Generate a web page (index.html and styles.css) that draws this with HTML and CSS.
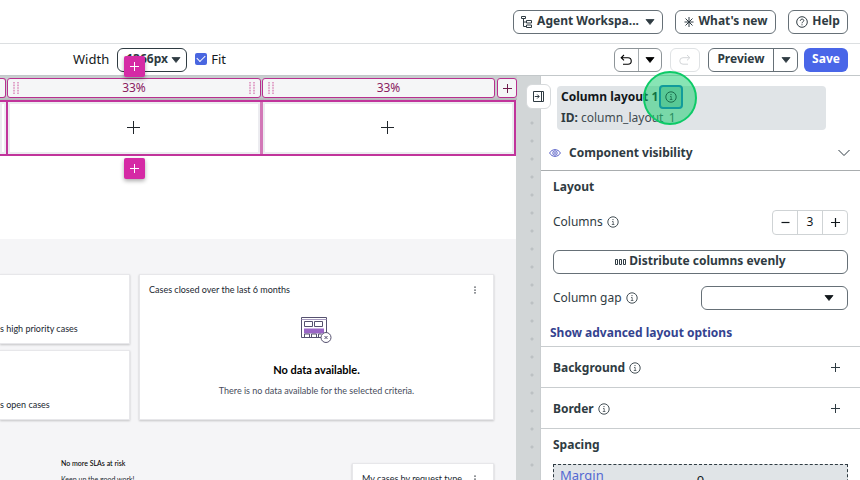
FILE: index.html
```html
<!DOCTYPE html>
<html lang="en">
<head>
<meta charset="utf-8">
<title>UI Builder</title>
<link rel="stylesheet" href="styles.css">
</head>
<body>
<svg width="0" height="0" class="defs" aria-hidden="true">
  <symbol id="info" viewBox="0 0 12 12"><circle cx="6" cy="6" r="5.2" fill="none" stroke="currentColor" stroke-width=".9"/><path d="M5 5.500h1.200v3M4.800 8.500h2.600" fill="none" stroke="currentColor" stroke-width=".7"/><circle cx="6" cy="3.600" r=".6" fill="currentColor"/></symbol>
  <symbol id="caret" viewBox="0 0 10 6"><path d="M1 .5h8L5 5.500z" fill="currentColor" stroke="currentColor" stroke-linejoin="round" stroke-width=".8"/></symbol>
  <symbol id="plus" viewBox="0 0 13 13"><path d="M6.500 0v13M0 6.500h13" fill="none" stroke="currentColor"/></symbol>
  <symbol id="plus-small" viewBox="0 0 9 9"><path d="M4.500 0v9M0 4.500h9" fill="none" stroke="currentColor"/></symbol>
  <symbol id="grip" viewBox="0 0 6 12"><path d="M1 0v12M5 0v12" fill="none" stroke="currentColor" stroke-width="1.6" stroke-dasharray="1.6 1"/></symbol>
  <symbol id="more" viewBox="0 0 2 8"><path d="M1 .5v1.300M1 3.400v1.300M1 6.200v1.300" stroke="currentColor" stroke-width="1.3"/></symbol>
</svg>

<header class="topbar">
  <button class="btn workspace" aria-haspopup="listbox"><svg width="12" height="12" viewBox="0 0 12 12" fill="none" stroke="currentColor"><path d="M.5.5h4v2h-4zM2.500 2.500v8h3M2.500 6h3M5.500 4.500h5v2.500h-5zM5.500 9h5v2.500h-5z"/></svg><span>Agent Workspa...</span><svg class="caret" width="10" height="6"><use href="#caret"/></svg></button>
  <button class="btn news"><svg width="12" height="12" viewBox="0 0 12 12" fill="none" stroke="currentColor"><path d="M6 1v10M1.500 6h9M2.500 2.500l7 7M9.500 2.500l-7 7"/></svg><span>What's new</span></button>
  <button class="btn help"><svg width="12" height="12" viewBox="0 0 12 12" fill="none" stroke="currentColor"><circle cx="6" cy="6" r="5.300"/><path d="M4.300 4.800c0-2.300 3.500-2.200 3.500-.2 0 1.200-1.800 1.200-1.800 2.700M6 8.300v1"/></svg><span>Help</span></button>
</header>

<div class="toolbar">
  <div class="viewport">
    <label for="width">Width</label>
    <span class="select width-select"><select id="width"><option>1366px</option></select><svg class="caret" width="10" height="6"><use href="#caret"/></svg></span>
    <label class="fit"><input type="checkbox" checked><span>Fit</span></label>
  </div>
  <div class="split undo">
    <button aria-label="Undo"><svg width="12" height="12" viewBox="0 0 12 12" fill="none" stroke="currentColor" stroke-width="1.1"><path d="M4 1L1.200 3.700 4 6.400M1.200 3.700H8a3 3 0 0 1 0 6.500H3"/></svg></button>
    <button aria-label="Undo history"><svg width="10" height="6"><use href="#caret"/></svg></button>
  </div>
  <button class="redo" aria-label="Redo" disabled><svg width="12" height="12" viewBox="0 0 12 12" fill="none" stroke="currentColor"><path d="M8 1l2.800 2.700L8 6.400M10.800 3.700H4a3 3 0 0 0 0 6.500h5"/></svg></button>
  <div class="split preview">
    <button>Preview</button>
    <button aria-label="Preview options"><svg width="10" height="6"><use href="#caret"/></svg></button>
  </div>
  <button class="save">Save</button>
</div>

<div class="workspace-body">
  <main class="stage">
    <div class="artboard">
      <div class="column-heads">
        <div class="head head-clipped"></div>
        <div class="head"><svg width="6" height="12"><use href="#grip"/></svg><span>33%</span><svg width="6" height="12"><use href="#grip"/></svg></div>
        <div class="head head-last"><svg width="6" height="12"><use href="#grip"/></svg><span>33%</span></div>
        <button class="head head-add" aria-label="Add column"><svg width="9" height="9"><use href="#plus-small"/></svg></button>
      </div>
      <div class="drop-row">
        <div class="drop"></div>
        <div class="drop">
          <button class="insert above" aria-label="Insert above"><svg width="9" height="9"><use href="#plus-small"/></svg></button>
          <svg width="13" height="13"><use href="#plus"/></svg>
          <button class="insert below" aria-label="Insert below"><svg width="9" height="9"><use href="#plus-small"/></svg></button>
        </div>
        <div class="drop drop-last"><svg width="13" height="13"><use href="#plus"/></svg></div>
      </div>
      <div class="blank"></div>
      <div class="dashboard">
        <div class="cards">
          <div class="stats">
            <section class="card stat">s high priority cases</section>
            <section class="card stat">s open cases</section>
          </div>
          <section class="card chart">
            <header><span>Cases closed over the last 6 months</span><svg width="2" height="8"><use href="#more"/></svg></header>
            <div class="empty">
              <svg width="31" height="27" viewBox="0 0 31 27" fill="none" stroke="#55516f"><path d="M.5.5h25v20H.5z"/><path d="M.5 2.500h25" stroke="#a79abf"/><path d="M3.500 4.500h8v5h-8zM13.500 4.500h8v5h-8z"/><path d="M3 11.500h20v5H3z" fill="#9a66c6" stroke="none"/><path d="M3.500 20v-3h5v3M10.500 20v-3h5v3M17.500 20v-3h3"/><circle cx="25" cy="20.500" r="5" fill="#fff"/><path d="M23.500 19l3 3M26.500 19l-3 3"/></svg>
              <h2>No data available.</h2>
              <p>There is no data available for the selected criteria.</p>
            </div>
          </section>
        </div>
        <div class="lower">
          <div class="sla"><strong>No more SLAs at risk</strong><span>Keep up the good work!</span></div>
          <section class="card requests"><span>My cases by request type</span><svg width="2" height="8"><use href="#more"/></svg></section>
        </div>
      </div>
    </div>
    <div class="gutter"></div>
  </main>

  <aside class="panel">
    <button class="collapse" aria-label="Collapse panel"><svg width="11" height="11" viewBox="0 0 11 11" fill="none" stroke="currentColor"><path d="M.5.5h10v10H.5zM8.500.5v10M1.800 5.500h4.200M4.200 3.500l2 2-2 2"/></svg></button>
    <div class="identity">
      <h1>Column layout 1<span class="hotspot"><button aria-label="Component information"><svg width="12" height="12"><use href="#info"/></svg></button></span></h1>
      <p><b>ID:</b> column_layout_1</p>
    </div>
    <button class="visibility"><svg width="12" height="8" viewBox="0 0 12 8" fill="none" stroke="#5b62c8"><path d="M.6 4C3-.5 9-.5 11.400 4 9 8.500 3 8.500.6 4z"/><circle cx="6" cy="4" r="2.200"/><circle cx="6" cy="4" r=".5"/></svg><span>Component visibility</span><svg class="chevron" width="12" height="8" viewBox="0 0 12 8" fill="none" stroke="currentColor"><path d="M.5 1L6 6.500 11.500 1"/></svg></button>
    <section class="layout">
      <h2>Layout</h2>
      <div class="field">
        <label for="columns">Columns</label><svg width="12" height="12"><use href="#info"/></svg>
        <div class="stepper"><button aria-label="Fewer columns"><svg width="9" height="9" viewBox="0 0 9 9"><path d="M.5 4.500h8" stroke="currentColor" stroke-width="1.200"/></svg></button><input id="columns" value="3"><button aria-label="More columns"><svg width="9" height="9" viewBox="0 0 9 9"><path d="M4.500 0v9M0 4.500h9" stroke="currentColor" stroke-width="1.200"/></svg></button></div>
      </div>
      <button class="btn distribute"><svg width="11" height="8" viewBox="0 0 11 8" fill="none" stroke="currentColor"><path d="M.5 1.500h2v5h-2zM4.500 1.500h2v5h-2zM8.500 1.500h2v5h-2z"/></svg><span>Distribute columns evenly</span></button>
      <div class="field">
        <label for="gap">Column gap</label><svg width="12" height="12"><use href="#info"/></svg>
        <span class="select gap-select"><select id="gap"><option></option></select><svg class="caret" width="10" height="6"><use href="#caret"/></svg></span>
      </div>
      <a class="advanced" href="#advanced">Show advanced layout options</a>
    </section>
    <section class="group"><h2>Background</h2><svg width="12" height="12"><use href="#info"/></svg><button aria-label="Add background"><svg width="9" height="9"><use href="#plus-small"/></svg></button></section>
    <section class="group"><h2>Border</h2><svg width="12" height="12"><use href="#info"/></svg><button aria-label="Add border"><svg width="9" height="9"><use href="#plus-small"/></svg></button></section>
    <section class="spacing">
      <h2>Spacing</h2>
      <div class="margin-box"><label for="margin">Margin</label><input id="margin" value="0"></div>
    </section>
  </aside>
</div>
</body>
</html>
```
FILE: styles.css
```css
*, ::before, ::after { box-sizing: border-box; }
body {
  margin: 0;
  height: 100vh;
  overflow: hidden;
  display: flex;
  flex-direction: column;
  background: #fff;
  color: #2f3b42;
  font: 12px/18px "Noto Sans", sans-serif;
}
.defs { position: absolute; }
svg { flex: none; display: block; }
h1, h2, p { margin: 0; font-size: inherit; }
button, select, input { font: inherit; color: inherit; margin: 0; }
button { padding: 0; border: 0; background: none; display: flex; align-items: center; justify-content: center; }

.btn {
  height: 24px;
  gap: 4px;
  border: 1px solid #667077;
  border-radius: 6px;
  background: #fff;
  font-weight: 700;
}
.btn span { padding-bottom: 2px; }

.topbar {
  flex: none;
  height: 44px;
  padding: 0 12px;
  display: flex;
  align-items: center;
  justify-content: flex-end;
  gap: 12px;
  border-bottom: 1px solid #dcdfe1;
}
.workspace { width: 150px; }
.workspace .caret { margin-left: 2px; }
.news { width: 101px; gap: 3px; }
.help { width: 60px; }

.toolbar {
  flex: none;
  height: 32px;
  padding: 0 12px;
  display: flex;
  align-items: center;
  border-bottom: 1px solid #c3c8ca;
}
.viewport { flex: 1; display: flex; align-items: center; padding-left: 61px; color: #151920; font-size: 13px; }
.viewport > label { padding-bottom: 2px; }
.select { position: relative; display: flex; }
.select select {
  appearance: none;
  width: 100%;
  height: 24px;
  padding: 0 8px 2px;
  border: 1px solid #667077;
  border-radius: 6px;
  background: #fff;
}
.select .caret { position: absolute; right: 14px; top: 9px; color: #11171b; pointer-events: none; }
.width-select { width: 70px; margin: 0 8px; }
.width-select select { border-color: #2f3b42; color: #2f3b42; font-size: 12px; font-weight: 700; }
.width-select .caret { right: 6px; color: #2f3b42; }
.fit { display: flex; align-items: center; gap: 4px; }
.fit input {
  appearance: none;
  width: 12px;
  height: 12px;
  border-radius: 2px;
  background: #4966e0;
  display: grid;
  place-items: center;
}
.fit input::after {
  content: "";
  width: 8px;
  height: 5px;
  border: solid #fff;
  border-width: 0 0 1px 1px;
  transform: translateY(-1px) rotate(-45deg);
}
.split { height: 24px; display: flex; border: 1px solid #667077; border-radius: 6px; }
.split button + button { border-left: 1px solid #667077; width: 24px; }
.undo { width: 48px; border-color: #8d9498; color: #000; }
.undo button { flex: 1; }
.undo button + button { border-color: #a5abae; }
.redo { width: 30px; height: 24px; margin: 0 8px; border: 1px solid #dfe2e4; border-radius: 6px; color: #d3d6d8; }
.preview { width: 90px; }
.preview button { font-weight: 700; }
.preview button:first-child { flex: 1; padding-bottom: 2px; }
.save { width: 44px; height: 24px; margin-left: 6px; padding-bottom: 2px; border-radius: 6px; background: #4966e8; color: #fff; font-weight: 700; }

.workspace-body { flex: 1; min-height: 0; display: flex; }
.stage { flex: 1; min-width: 0; display: flex; background: #d2d6d7; }
.artboard { flex: 1; min-width: 0; display: flex; flex-direction: column; }
.artboard > * { flex: none; }
.gutter {
  width: 24px;
  margin-top: 38px;
  background: radial-gradient(circle, #bcc1c3 1px, transparent 2px) 7px 0 / 18px 18px repeat-y;
}
.column-heads {
  display: grid;
  grid-template-columns: 6px 254fr 233fr 21px;
  gap: 1px;
  height: 24px;
  padding-top: 2px;
  margin-right: -1px;
  background: linear-gradient(#c9cecf 20px, #b5b7b9);
}
.head {
  height: 20px;
  display: flex;
  align-items: center;
  justify-content: space-between;
  padding: 0 5px;
  border: 1px solid #b8308f;
  border-radius: 3px;
  background: #f5f6f7;
  color: #8a215f;
}
.head > svg { color: #dc8fbd; }
.head-clipped { padding: 0; border-left: 0; border-radius: 0 3px 3px 0; }
.head-last span { flex: 1; padding-left: 14px; text-align: center; }
.head-add { margin-left: 1px; padding: 0; justify-content: center; }
.head-add > svg { color: #701c4c; }
.drop-row {
  display: grid;
  grid-template-columns: 6px 254fr 254fr;
  height: 56px;
  background: #fff;
  border: solid #c1349b;
  border-width: 2px 2px 2px 0;
}
.drop {
  position: relative;
  display: flex;
  align-items: center;
  justify-content: center;
  padding-right: 2px;
  padding-bottom: 1px;
  box-shadow: inset 0 0 0 2px #ececf0;
  color: #20262b;
}
.drop + .drop { border-left: 2px solid #c1349b; }
.drop + .drop-last { border-left: 3px solid #d278b7; }
.insert {
  position: absolute;
  left: calc(50% - 10px);
  z-index: 2;
  width: 21px;
  height: 21px;
  border-radius: 2px;
  background: #d52aa5;
  color: #fff;
  box-shadow: 0 2px 4px #0005;
}
.above { top: -46px; }
.below { bottom: -25px; }
.blank { height: 83px; background: #fff; }

.artboard > .dashboard {
  flex: 1;
  min-height: 0;
  padding: 35px 22px 0 0;
  background: #f5f5f7;
  font: 9px/14px Lato, sans-serif;
  color: #20262f;
}
.card { background: #fff; border: 1px solid #e7e7ea; box-shadow: 0 1px 2px #0003; }
.cards { display: flex; gap: 9px; }
.stats { width: 130px; display: flex; flex-direction: column; gap: 6px; }
.stat { height: 70px; padding: 0 0 7px; display: flex; align-items: flex-end; border-left: 0; }
.chart { flex: 1; height: 146px; }
.chart header { display: flex; justify-content: space-between; align-items: center; padding: 8px 17px 0 9px; }
.empty { display: flex; flex-direction: column; align-items: center; }
.empty svg { margin-top: 20px; }
.empty h2 { margin-top: 18px; font-size: 11px; line-height: 16px; color: #000; }
.empty p { margin-top: 6px; color: #474c5b; }
.lower { display: flex; justify-content: space-between; align-items: flex-start; margin-top: 35px; padding-left: 61px; }
.sla { display: flex; flex-direction: column; font-size: 7px; line-height: 16px; }
.sla strong { font-weight: 500; color: #000; }
.requests { width: 142px; height: 60px; margin-top: 8px; padding: 8px 17px 0 9px; display: flex; justify-content: space-between; }
.requests svg { margin-top: 3px; }

.panel { position: relative; width: 320px; border-left: 1px solid #c9cdcf; background: #fff; }
.collapse {
  position: absolute;
  left: -15px;
  top: 8px;
  width: 25px;
  height: 25px;
  border: 1px solid #d7dadc;
  border-radius: 6px;
  background: #fff;
}
.identity { margin: 10px 34px 0 16px; height: 44px; padding: 0 4px; border-radius: 4px; background: #e0e4e7; line-height: 20px; }
.identity h1 { display: flex; align-items: center; height: 22px; color: #10161a; }
.identity p { color: #414b51; }
.identity b { color: #2f3b42; }
.hotspot { position: relative; margin-left: 1px; }
.hotspot::before {
  content: "";
  position: absolute;
  left: -16px;
  top: -14px;
  width: 54px;
  height: 54px;
  border: 2px solid #0dca67;
  border-radius: 50%;
  background: #12cb6b80;
}
.hotspot button { position: relative; width: 24px; height: 24px; border: 2px solid #129b9b; border-radius: 4px; background: #28b47b66; color: #136244; }
.visibility { width: 100%; height: 41px; padding: 6px 10px 0 8px; gap: 8px; justify-content: flex-start; border-bottom: 1px solid #a9adaf; font-weight: 700; }
.chevron { margin-left: auto; }
.layout { height: 176px; padding: 7px 12px 0; border-bottom: 1px solid #c9cdcf; }
.field { display: flex; align-items: center; gap: 4px; height: 24px; }
.layout h2 + .field { margin: 14px 0 16px; }
.stepper { margin-left: auto; display: flex; width: 76px; height: 25px; border: 1px solid #cfd3d5; border-radius: 4px; color: #11171b; }
.stepper button { flex: 1; }
.stepper input { width: 26px; padding: 0; border: solid #cfd3d5; border-width: 0 1px; text-align: center; background: none; }
.distribute { width: 100%; margin-bottom: 12px; gap: 3px; }
.gap-select { margin-left: auto; width: 147px; }
.advanced { display: block; margin: 14px 0 0 -3px; color: #34438f; font-weight: 700; text-decoration: none; }
.group { display: flex; align-items: center; gap: 4px; height: 41px; padding: 1px 19px 0 12px; border-bottom: 1px solid #c9cdcf; }
.group button { margin-left: auto; width: 12px; height: 12px; }
.spacing { padding: 7px 12px 0; }
.margin-box { display: flex; margin-top: 10px; height: 90px; padding: 0 6px; border: 1px dashed #2f3b42; background: #e0e4e7; font-size: 13px; line-height: 20px; }
.margin-box label { color: #5368d2; width: 60px; }
.margin-box input { flex: 1; min-width: 0; height: 30px; margin-right: 60px; padding: 0; border: 0; background: none; text-align: center; color: #11171b; }
```
